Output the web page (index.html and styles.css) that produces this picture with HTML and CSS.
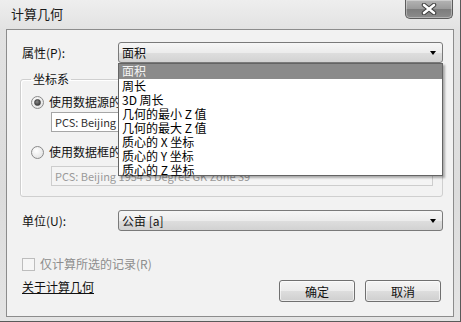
FILE: index.html
```html
<!DOCTYPE html>
<html lang="zh-CN">
<head>
    <meta charset="UTF-8">
    <title>计算几何</title>
    <link rel="stylesheet" href="styles.css">
</head>
<body>
    <div class="window">
        <div class="titlebar">
            <span class="title">计算几何</span>
            <span class="close">
                <svg width="18" height="12" viewBox="0 0 18 12">
                    <path d="M4 2 L14 10 M14 2 L4 10" stroke="#3c3c3c" stroke-width="4.5" stroke-linecap="round"/>
                    <path d="M4 2 L14 10 M14 2 L4 10" stroke="#ffffff" stroke-width="2.6" stroke-linecap="round"/>
                </svg>
            </span>
        </div>

        <div class="client">
            <div class="field">
                <label class="label">属性(P):</label>
                <div class="combo">
                    <span class="combo-text">面积</span>
                    <span class="arrow"></span>
                    <ul class="dropdown">
                        <li class="selected">面积</li>
                        <li>周长</li>
                        <li>3D 周长</li>
                        <li>几何的最小 Z 值</li>
                        <li>几何的最大 Z 值</li>
                        <li>质心的 X 坐标</li>
                        <li>质心的 Y 坐标</li>
                        <li>质心的 Z 坐标</li>
                    </ul>
                </div>
            </div>

            <fieldset class="group">
                <legend>坐标系</legend>
                <div class="radio-row">
                    <span class="radio on"></span>
                    <span>使用数据源的坐标系(D):</span>
                </div>
                <div class="textbox">PCS: Beijing 1954 3 Degree GK Zone 39</div>
                <div class="radio-row second">
                    <span class="radio"></span>
                    <span>使用数据框的坐标系(F):</span>
                </div>
                <div class="textbox disabled">PCS: Beijing 1954 3 Degree GK Zone 39</div>
            </fieldset>

            <div class="field units">
                <label class="label">单位(U):</label>
                <div class="combo">
                    <span class="combo-text">公亩 [a]</span>
                    <span class="arrow"></span>
                </div>
            </div>

            <div class="check-row">
                <span class="checkbox"></span>
                <span>仅计算所选的记录(R)</span>
            </div>

            <div class="bottom-row">
                <a class="link" href="#">关于计算几何</a>
                <button class="btn ok">确定</button>
                <button class="btn">取消</button>
            </div>
        </div>
    </div>
</body>
</html>
```

FILE: styles.css
```css
body {
    margin: 0;
    font-family: "Noto Sans CJK SC", "Noto Sans", sans-serif;
    font-size: 12px;
    line-height: 16px;
    color: #111;
    background: #fff;
}
.window {
    width: 461px;
    height: 322px;
    box-sizing: border-box;
    display: flex;
    flex-direction: column;
    background: linear-gradient(#eeeeee, #e2e2e2 30px, #dcdcdc 60%, #e4e4e4);
    border-right: 1px solid #5a5a5a;
    border-bottom: 1px solid #5a5a5a;
    overflow: hidden;
}
.titlebar {
    height: 29px;
    display: flex;
    align-items: flex-start;
}
.title {
    font-size: 13px;
    line-height: 27px;
    padding-left: 11px;
    color: #1a1a1a;
}
.close {
    margin-left: auto;
    margin-right: 7px;
    width: 48px;
    height: 19px;
    box-sizing: border-box;
    display: flex;
    align-items: center;
    justify-content: center;
    border: 1px solid #5c5c5c;
    border-top: none;
    border-radius: 0 0 5px 5px;
    background: linear-gradient(#b4b4b4, #9a9a9a 50%, #7c7c7c 51%, #8c8c8c);
    box-shadow: inset 0 0 0 1px rgba(255, 255, 255, 0.35);
}
.client {
    flex: 1;
    margin: 0 6px 4px 6px;
    border: 1px solid #8c8c8c;
    background: #f2f2f2;
    display: flex;
    flex-direction: column;
}
.field {
    display: flex;
    align-items: center;
    margin-top: 12px;
    padding-left: 15px;
}
.label {
    width: 96px;
}
.combo {
    position: relative;
    width: 325px;
    height: 21px;
    box-sizing: border-box;
    border: 1px solid #7a7a7a;
    border-radius: 3px;
    background: linear-gradient(#f6f6f6, #ececec 50%, #dedede 51%, #d2d2d2);
    display: flex;
    align-items: center;
}
.combo-text {
    padding-left: 3px;
    flex: 1;
}
.arrow {
    margin-right: 6px;
    width: 0;
    height: 0;
    border-left: 3.5px solid transparent;
    border-right: 3.5px solid transparent;
    border-top: 4px solid #000;
}
.dropdown {
    position: absolute;
    top: 20px;
    left: -1px;
    width: 325px;
    height: 113px;
    box-sizing: border-box;
    margin: 0;
    padding: 0;
    list-style: none;
    background: #fff;
    border: 1px solid #646464;
    box-shadow: 2px 2px 2px rgba(0, 0, 0, 0.3);
    z-index: 5;
}
.dropdown li {
    height: 14px;
    line-height: 14px;
    padding-left: 3px;
    color: #000;
}
.dropdown li.selected {
    height: 15px;
    background: #8a8a8a;
    color: #f4f4f4;
}
.group {
    margin: 8px 10px 0 13px;
    padding: 7px 9px 10px 10px;
    border: 1px solid #cfcfcf;
    border-radius: 3px;
    box-shadow: inset 1px 1px 0 #fff;
}
.group legend {
    padding: 0 2px;
    line-height: 16px;
}
.radio-row {
    display: flex;
    align-items: center;
    height: 16px;
    white-space: nowrap;
}
.radio-row.second {
    margin-top: 12px;
}
.radio {
    width: 11px;
    height: 11px;
    margin-right: 5px;
    border: 1px solid #8a8a8a;
    border-radius: 50%;
    background: radial-gradient(circle at 40% 35%, #ffffff, #dcdcdc);
    display: flex;
    align-items: center;
    justify-content: center;
}
.radio.on::after {
    content: "";
    width: 5px;
    height: 5px;
    border-radius: 50%;
    background: radial-gradient(circle at 40% 35%, #8a8a8a, #2a2a2a);
    border: 1px solid #444;
}
.textbox {
    margin: 2px 0 0 20px;
    width: 382px;
    height: 20px;
    box-sizing: border-box;
    border: 1px solid #a6a6a6;
    background: #fff;
    padding-left: 3px;
    font-size: 11px;
    line-height: 18px;
    color: #333;
    white-space: nowrap;
    overflow: hidden;
}
.textbox.disabled {
    margin-top: 6px;
    border-color: #cdcdcd;
    background: #f4f4f4;
    color: #9a9a9a;
}
.units {
    margin-top: 13px;
}
.check-row {
    display: flex;
    align-items: center;
    height: 16px;
    margin-top: 25px;
    padding-left: 15px;
    color: #8d8d8d;
}
.checkbox {
    width: 11px;
    height: 11px;
    margin-right: 5px;
    border: 1px solid #bdbdbd;
    background: #f6f6f6;
}
.bottom-row {
    display: flex;
    align-items: flex-start;
    margin-top: 7px;
    padding: 0 12px 0 15px;
}
.link {
    color: #111;
    text-decoration: underline;
    margin-right: auto;
}
.btn {
    width: 76px;
    height: 22px;
    margin-top: 1px;
    padding: 0;
    font-family: inherit;
    font-size: 12px;
    color: #111;
    border: 1px solid #707070;
    border-radius: 3px;
    background: linear-gradient(#f4f4f4, #ebebeb 50%, #dddddd 51%, #cfcfcf);
    box-shadow: inset 0 0 0 1px rgba(255, 255, 255, 0.6);
}
.btn.ok {
    margin-right: 10px;
}
```
